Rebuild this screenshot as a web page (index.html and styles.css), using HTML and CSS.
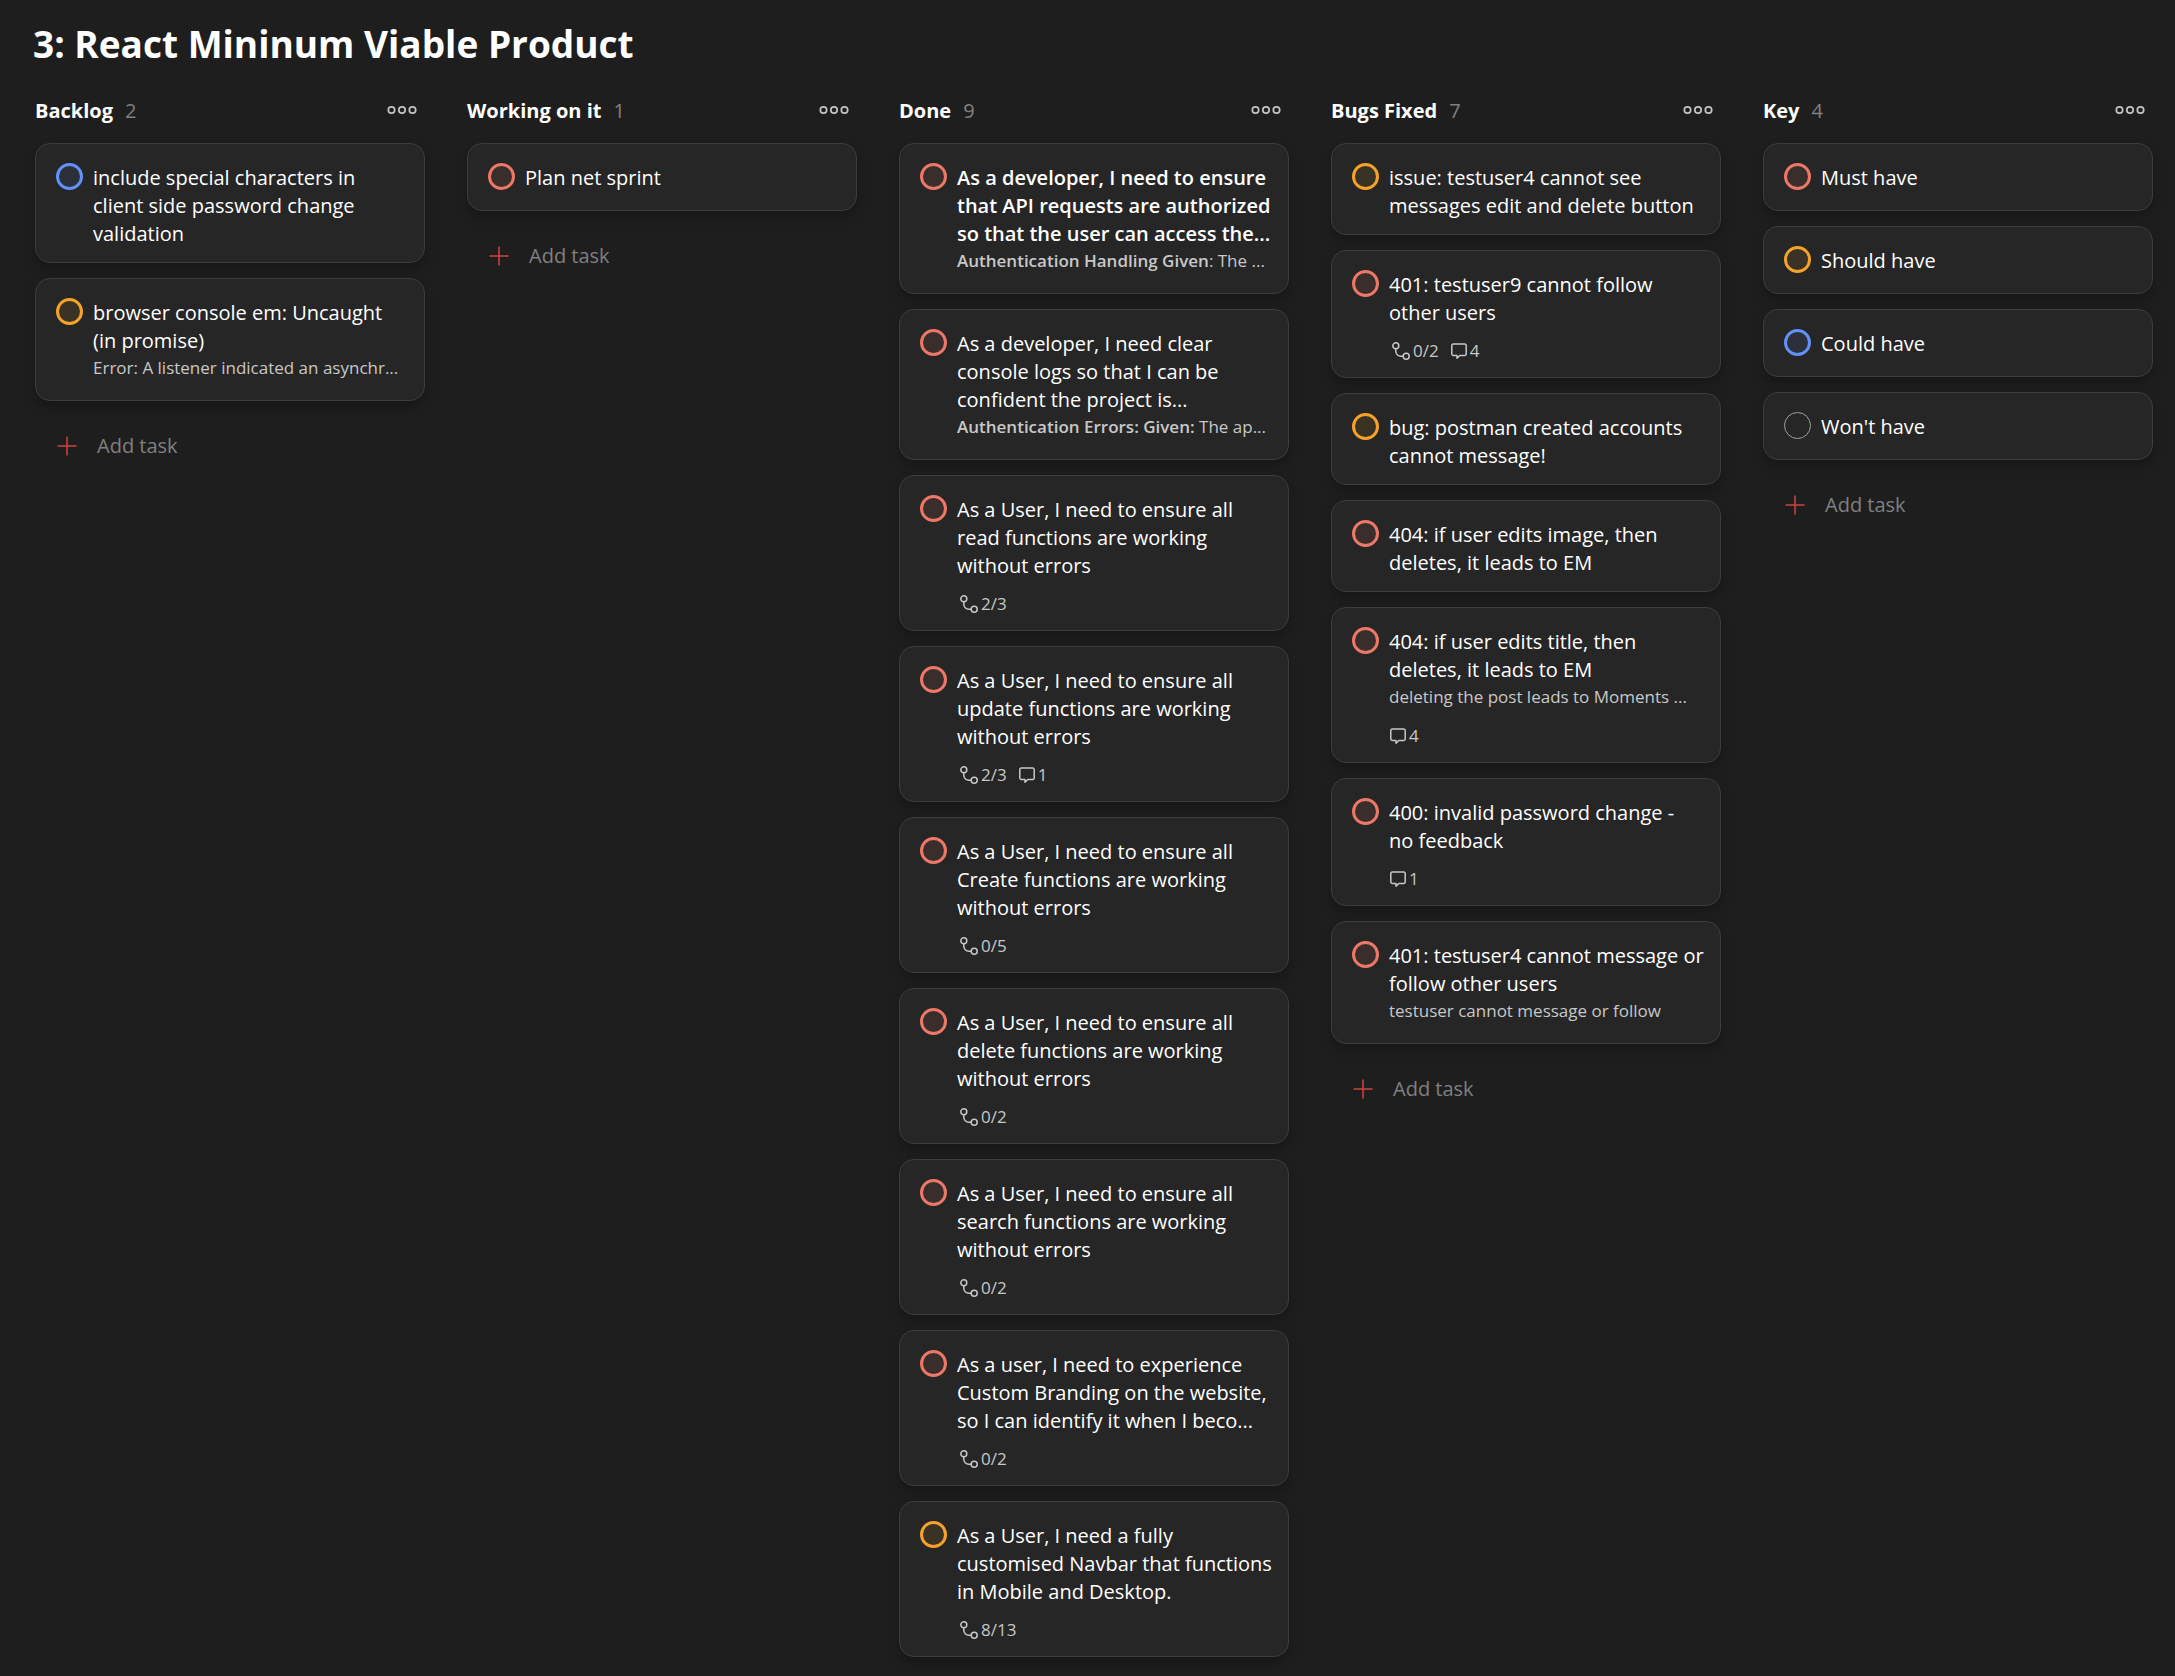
FILE: index.html
```html
<!DOCTYPE html>
<html lang="en">
<head>
<meta charset="utf-8">
<title>3: React Mininum Viable Product</title>
<link rel="stylesheet" href="styles.css">
</head>
<body>
<svg class="sprite" aria-hidden="true">
  <symbol id="i-more" viewBox="0 0 30 10"><g fill="none" stroke="currentColor" stroke-width="1.7"><circle cx="4.5" cy="5" r="3.2"/><circle cx="15" cy="5" r="3.2"/><circle cx="25.5" cy="5" r="3.2"/></g></symbol>
  <symbol id="i-sub" viewBox="-2 0 20 18"><g fill="none" stroke="currentColor" stroke-width="1.5"><circle cx="3.8" cy="3.8" r="3"/><circle cx="14.2" cy="14.2" r="3"/><path d="M3.8 6.8v2.4a5 5 0 0 0 5 5h2.4"/></g></symbol>
  <symbol id="i-note" viewBox="0 0 16 18"><path fill="none" stroke="currentColor" stroke-width="1.5" stroke-linejoin="round" d="M2.200 2h11.600a1.400 1.400 0 0 1 1.400 1.400v8.700a1.400 1.400 0 0 1-1.400 1.400H8.800l-2.800 2.800v-2.800H2.200a1.400 1.400 0 0 1-1.400-1.400V3.400a1.400 1.400 0 0 1 1.400-1.400z"/></symbol>
  <symbol id="i-plus" viewBox="0 0 20 20"><path fill="none" stroke="currentColor" stroke-width="1.5" d="M10 .5v19M.5 10h19"/></symbol>
</svg>
<h1 class="title">3: React Mininum Viable Product</h1>
<main class="board">
  <section class="column">
    <header class="head"><h2>Backlog</h2><span class="count">2</span><button class="more" aria-label="Backlog actions"><svg><use href="#i-more"/></svg></button></header>
    <article class="card"><input type="checkbox" class="ring p3" id="t1"><div class="body"><label for="t1">include special characters in client side password change validation</label></div></article>
    <article class="card"><input type="checkbox" class="ring p2" id="t2"><div class="body"><label for="t2">browser console em: Uncaught (in promise)</label><p class="desc">Error: A listener indicated an asynchr...</p></div></article>
    <button class="add"><svg><use href="#i-plus"/></svg>Add task</button>
  </section>

  <section class="column">
    <header class="head"><h2>Working on it</h2><span class="count">1</span><button class="more" aria-label="Working on it actions"><svg><use href="#i-more"/></svg></button></header>
    <article class="card"><input type="checkbox" class="ring p1" id="t3"><div class="body"><label for="t3">Plan net sprint</label></div></article>
    <button class="add"><svg><use href="#i-plus"/></svg>Add task</button>
  </section>

  <section class="column">
    <header class="head"><h2>Done</h2><span class="count">9</span><button class="more" aria-label="Done actions"><svg><use href="#i-more"/></svg></button></header>
    <article class="card"><input type="checkbox" class="ring p1" id="t4"><div class="body"><label for="t4"><b>As a developer, I need to ensure that API requests are authorized so that the user can access the...</b></label><p class="desc"><b>Authentication Handling Given</b>: The ...</p></div></article>
    <article class="card"><input type="checkbox" class="ring p1" id="t5"><div class="body"><label for="t5">As a developer, I need clear console logs so that I can be confident the project is...</label><p class="desc"><b>Authentication Errors: Given:</b> The ap...</p></div></article>
    <article class="card"><input type="checkbox" class="ring p1" id="t6"><div class="body"><label for="t6">As a User, I need to ensure all read functions are working without errors</label><div class="badges"><span><svg class="sub"><use href="#i-sub"/></svg>2/3</span></div></div></article>
    <article class="card"><input type="checkbox" class="ring p1" id="t7"><div class="body"><label for="t7">As a User, I need to ensure all update functions are working without errors</label><div class="badges"><span><svg class="sub"><use href="#i-sub"/></svg>2/3</span><span><svg class="note"><use href="#i-note"/></svg>1</span></div></div></article>
    <article class="card"><input type="checkbox" class="ring p1" id="t8"><div class="body"><label for="t8">As a User, I need to ensure all Create functions are working without errors</label><div class="badges"><span><svg class="sub"><use href="#i-sub"/></svg>0/5</span></div></div></article>
    <article class="card"><input type="checkbox" class="ring p1" id="t9"><div class="body"><label for="t9">As a User, I need to ensure all delete functions are working without errors</label><div class="badges"><span><svg class="sub"><use href="#i-sub"/></svg>0/2</span></div></div></article>
    <article class="card"><input type="checkbox" class="ring p1" id="t10"><div class="body"><label for="t10">As a User, I need to ensure all search functions are working without errors</label><div class="badges"><span><svg class="sub"><use href="#i-sub"/></svg>0/2</span></div></div></article>
    <article class="card"><input type="checkbox" class="ring p1" id="t11"><div class="body"><label for="t11">As a user, I need to experience Custom Branding on the website, so I can identify it when I beco...</label><div class="badges"><span><svg class="sub"><use href="#i-sub"/></svg>0/2</span></div></div></article>
    <article class="card"><input type="checkbox" class="ring p2" id="t12"><div class="body"><label for="t12">As a User, I need a fully customised Navbar that functions in Mobile and Desktop.</label><div class="badges"><span><svg class="sub"><use href="#i-sub"/></svg>8/13</span></div></div></article>
  </section>

  <section class="column">
    <header class="head"><h2>Bugs Fixed</h2><span class="count">7</span><button class="more" aria-label="Bugs Fixed actions"><svg><use href="#i-more"/></svg></button></header>
    <article class="card"><input type="checkbox" class="ring p2" id="t13"><div class="body"><label for="t13">issue: testuser4 cannot see messages edit and delete button</label></div></article>
    <article class="card"><input type="checkbox" class="ring p1" id="t14"><div class="body"><label for="t14">401: testuser9 cannot follow other users</label><div class="badges"><span><svg class="sub"><use href="#i-sub"/></svg>0/2</span><span><svg class="note"><use href="#i-note"/></svg>4</span></div></div></article>
    <article class="card"><input type="checkbox" class="ring p2" id="t15"><div class="body"><label for="t15">bug: postman created accounts cannot message!</label></div></article>
    <article class="card"><input type="checkbox" class="ring p1" id="t16"><div class="body"><label for="t16">404: if user edits image, then deletes, it leads to EM</label></div></article>
    <article class="card"><input type="checkbox" class="ring p1" id="t17"><div class="body"><label for="t17">404: if user edits title, then deletes, it leads to EM</label><p class="desc">deleting the post leads to Moments ...</p><div class="badges"><span><svg class="note"><use href="#i-note"/></svg>4</span></div></div></article>
    <article class="card"><input type="checkbox" class="ring p1" id="t18"><div class="body"><label for="t18">400: invalid password change -<br>no feedback</label><div class="badges"><span><svg class="note"><use href="#i-note"/></svg>1</span></div></div></article>
    <article class="card"><input type="checkbox" class="ring p1" id="t19"><div class="body"><label for="t19">401: testuser4 cannot message or follow other users</label><p class="desc">testuser cannot message or follow</p></div></article>
    <button class="add"><svg><use href="#i-plus"/></svg>Add task</button>
  </section>

  <section class="column">
    <header class="head"><h2>Key</h2><span class="count">4</span><button class="more" aria-label="Key actions"><svg><use href="#i-more"/></svg></button></header>
    <article class="card"><input type="checkbox" class="ring p1" id="t20"><div class="body"><label for="t20">Must have</label></div></article>
    <article class="card"><input type="checkbox" class="ring p2" id="t21"><div class="body"><label for="t21">Should have</label></div></article>
    <article class="card"><input type="checkbox" class="ring p3" id="t22"><div class="body"><label for="t22">Could have</label></div></article>
    <article class="card"><input type="checkbox" class="ring p4" id="t23"><div class="body"><label for="t23">Won't have</label></div></article>
    <button class="add"><svg><use href="#i-plus"/></svg>Add task</button>
  </section>
</main>
</body>
</html>
```
FILE: styles.css
```css
* { box-sizing: border-box; }

body {
  margin: 0;
  padding: 20px 22px 16px 33px;
  background: #1e1e1e;
  color: #fff;
  font-family: "Segoe UI", "Open Sans", "Noto Sans", sans-serif;
  font-size: 20px;
  line-height: 28px;
}

.sprite { display: none; }

h1, h2, p { margin: 0; }

button {
  border: 0;
  padding: 0;
  background: none;
  font: inherit;
  cursor: pointer;
}

.title {
  font-size: 37px;
  font-weight: 700;
  line-height: 48px;
}

.board {
  display: grid;
  grid-template-columns: repeat(5, minmax(0, 1fr));
  gap: 42px;
  align-items: start;
  padding: 28px 0 0 2px;
}

.column {
  display: flex;
  flex-direction: column;
  gap: 15px;
}

.head {
  display: flex;
  align-items: center;
  gap: 12px;
  height: 32px;
  padding: 0 8px 2px 0;
}

.head h2 {
  font-size: 20px;
  font-weight: 700;
}

.count { color: #808080; }

.more {
  display: flex;
  margin-left: auto;
  padding-bottom: 3px;
  color: #c4c4c4;
}

.more svg { width: 30px; height: 10px; }

.card {
  display: flex;
  gap: 10px;
  min-height: 68px;
  padding: 19px 16px 14px 20px;
  border: 1px solid #3d3d3d;
  border-radius: 15px;
  background: #262626;
  box-shadow: 0 6px 12px rgba(0, 0, 0, .24);
}

.body {
  flex: 1;
  min-width: 0;
  padding-top: 1px;
}

.body label { display: block; }

.body b { font-weight: 600; }

.ring {
  flex: none;
  appearance: none;
  width: 27px;
  height: 27px;
  margin: 0;
  border: 3px solid currentColor;
  border-radius: 50%;
}

.p1 { color: #ed7867; background: #3a2e2c; }
.p2 { color: #f5a228; background: #3b3226; }
.p3 { color: #6391fa; background: #2c303b; }
.p4 { color: #a0a0a0; border-width: 1px; }

.desc {
  padding-bottom: 5px;
  color: #c8c8c8;
  font-size: 17px;
  line-height: 26px;
  white-space: nowrap;
}

.badges {
  display: flex;
  gap: 12px;
  height: 24px;
  margin: 12px 0 0 1px;
  color: #c8c8c8;
  font-size: 17px;
  line-height: 24px;
}

.desc + .badges { margin-top: 9px; }

.badges span {
  display: flex;
  align-items: center;
  gap: 3px;
}

.sub { width: 20px; height: 18px; }
.note { width: 16px; height: 18px; }

.add {
  display: flex;
  align-items: center;
  gap: 20px;
  height: 32px;
  margin-top: 14px;
  padding-left: 22px;
  color: #808080;
}

.add svg { width: 20px; height: 20px; color: #d1453b; }
```
